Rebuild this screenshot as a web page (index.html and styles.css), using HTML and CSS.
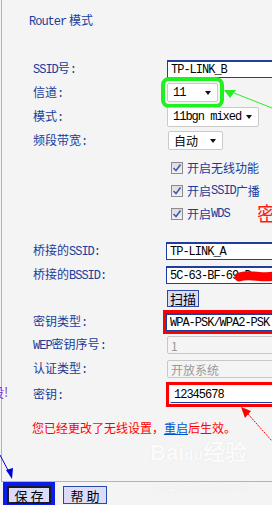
FILE: index.html
```html
<!DOCTYPE html>
<html lang="zh-CN">
<head>
  <meta charset="UTF-8" />
  <title>无线网络基本设置</title>
  <link rel="stylesheet" href="styles.css">
</head>
<body>
  <div class="frame">
    <div class="title"><span class="en">Router</span> 模式</div>

    <div class="row r-ssid">
      <span class="label"><span class="en">SSID</span>号<span class="en">:</span></span>
      <input class="field" type="text" value="TP-LINK_B">
    </div>
    <div class="row r-channel">
      <span class="label">信道<span class="en">:</span></span>
      <div class="select sel-channel mark-green"><span class="en">11</span><i class="arrow"></i></div>
    </div>
    <div class="row r-mode">
      <span class="label">模式<span class="en">:</span></span>
      <div class="select sel-mode"><span class="en">11bgn mixed</span><i class="arrow"></i></div>
    </div>
    <div class="row r-bw">
      <span class="label">频段带宽<span class="en">:</span></span>
      <div class="select sel-bw">自动<i class="arrow"></i></div>
    </div>

    <div class="checks">
      <div class="row check"><span class="label"></span><span class="box"><svg width="10" height="10" viewBox="0 0 10 10"><path d="M1.5 5 L4 7.5 L8.5 1.5" fill="none" stroke="#3d5cb4" stroke-width="1.6"/></svg></span>开启无线功能</div>
      <div class="row check"><span class="label"></span><span class="box"><svg width="10" height="10" viewBox="0 0 10 10"><path d="M1.5 5 L4 7.5 L8.5 1.5" fill="none" stroke="#3d5cb4" stroke-width="1.6"/></svg></span>开启<span class="en">SSID</span>广播</div>
      <div class="row check"><span class="label"></span><span class="box"><svg width="10" height="10" viewBox="0 0 10 10"><path d="M1.5 5 L4 7.5 L8.5 1.5" fill="none" stroke="#3d5cb4" stroke-width="1.6"/></svg></span>开启<span class="en">WDS</span></div>
    </div>

    <div class="row r-bridge">
      <span class="label">桥接的<span class="en">SSID:</span></span>
      <input class="field shift" type="text" value="TP-LINK_A">
    </div>
    <div class="row r-bssid">
      <span class="label">桥接的<span class="en">BSSID:</span></span>
      <input class="field shift" type="text" value="5C-63-BF-69-D">
    </div>
    <div class="row r-scan">
      <span class="label"></span>
      <button class="scan">扫描</button>
    </div>
    <div class="row r-keytype">
      <span class="label">密钥类型<span class="en">:</span></span>
      <input class="field shift mark-red" type="text" value="WPA-PSK/WPA2-PSK">
    </div>
    <div class="row r-wep">
      <span class="label"><span class="en">WEP</span>密钥序号<span class="en">:</span></span>
      <input class="field off" type="text" value="1" disabled>
    </div>
    <div class="row r-auth">
      <span class="label">认证类型<span class="en">:</span></span>
      <input class="field off" type="text" value="开放系统" disabled>
    </div>
    <div class="row r-key">
      <span class="label">密钥<span class="en">:</span></span>
      <input class="field keyfield mark-red" type="text" value="12345678">
    </div>

    <p class="notice">您已经更改了无线设置，<a href="#">重启</a>后生效。</p>
  </div>

  <div class="bar">
    <button class="btn save">保 存</button>
    <button class="btn">帮 助</button>
  </div>

  <!-- screenshot annotations -->
  <span class="note-mi">密</span>
  <span class="note-bang">设!</span>
  <div class="watermark">
    <div class="wm-logo">Bai<b>du</b>经验</div>
    <div class="wm-url">jingyan.baidu.com</div>
  </div>
  <svg class="marks" width="272" height="505" viewBox="0 0 272 505">
    <path d="M239 277 C250 273 262 279 274 276" stroke="#ff0000" stroke-width="9" fill="none" stroke-linecap="round"/>
    <line x1="234" y1="93" x2="272" y2="108" stroke="#22ee22" stroke-width="1"/>
    <polygon points="224,90 236,90 230,98" fill="#22ee22"/>
    <line x1="248" y1="414" x2="272" y2="441" stroke="#ff0000" stroke-width="1" stroke-dasharray="2 1"/>
    <polygon points="241,407 251,411 245,418" fill="#ff0000"/>
    <line x1="0" y1="455" x2="10" y2="474" stroke="#0000dd" stroke-width="1"/>
    <polygon points="6,470 13,468 12,479" fill="#0000dd"/>
  </svg>
</body>
</html>
```

FILE: styles.css
```css
html, body {
  margin: 0;
  padding: 0;
  background: #f4f4f4;
  font-family: "Noto Sans CJK SC", sans-serif;
  font-size: 12px;
  line-height: 14px;
  width: 272px;
  height: 505px;
  overflow: hidden;
  position: relative;
}

.en {
  font-family: "Liberation Mono", monospace;
  letter-spacing: -1px;
}

.frame {
  box-sizing: border-box;
  height: 482px;
  margin-left: 1px;
  padding-left: 31px;
  border-left: 1px solid #f3a45a;
  border-bottom: 1px solid #f3a45a;
  color: #1a3c9a;
  width: 400px;
}

.title {
  margin: 0 0 0 -4px;
  padding-top: 13px;
  height: 14px;
}

.row {
  display: flex;
  align-items: center;
}

.label {
  width: 134px;
  flex: none;
  white-space: nowrap;
}

/* text fields */
.field {
  box-sizing: border-box;
  width: 120px;
  height: 18px;
  margin: 0;
  padding: 0 3px;
  border: 1px solid #1f3f9f;
  border-top-width: 2px;
  background: #fff;
  color: #000;
  font-family: "Liberation Mono", monospace;
  font-size: 12px;
  letter-spacing: -1px;
  outline: none;
}

.field.shift {
  margin-left: -1px;
}

.field.off {
  border: 1px solid #c8c8c8;
  border-radius: 2px;
  background: #f4f4f4;
  color: #999;
  font-family: "Noto Sans CJK SC", sans-serif;
  letter-spacing: 0;
}

.keyfield {
  margin-left: 3px;
  height: 17px;
  border: 1px solid #fff;
  border-bottom-color: #1f3f9f;
}

.mark-red {
  outline: 3px solid #ff0000;
  outline-offset: 0;
}

.keyfield.mark-red {
  outline-offset: 1px;
}

/* fake select boxes */
.select {
  box-sizing: border-box;
  display: flex;
  align-items: center;
  height: 19px;
  padding: 0 6px 0 5px;
  border: 1px solid #cacaca;
  border-radius: 2px;
  background: #fff;
  color: #000;
}

.select .arrow {
  margin-left: auto;
  width: 0;
  height: 0;
  border-left: 3.5px solid transparent;
  border-right: 3.5px solid transparent;
  border-top: 4px solid #111;
}

.sel-channel { width: 51px; }
.sel-mode { width: 92px; height: 20px; }
.sel-bw { width: 55px; margin-left: 1px; }

.mark-green {
  outline: 4px solid #1ff01f;
  outline-offset: 2px;
}

.r-ssid { height: 18px; margin-top: 33px; }
.r-channel { height: 19px; margin-top: 5px; }
.r-mode { height: 20px; margin-top: 5px; }
.r-bw { height: 19px; margin-top: 4px; }

.checks { margin-top: 6px; }

.check {
  height: 23px;
  color: #1a3c9a;
}

.box {
  box-sizing: border-box;
  width: 12px;
  height: 12px;
  margin: 0 4px;
  border: 1px solid #8c8c8c;
  background: linear-gradient(#dcdcdc, #f2f2f2);
  display: flex;
  align-items: center;
  justify-content: center;
}

.r-bridge { height: 18px; margin-top: 17px; }
.r-bssid { height: 18px; margin-top: 6px; }
.r-scan { height: 17px; margin-top: 6px; }
.r-keytype { height: 18px; margin-top: 6px; }
.r-wep { height: 18px; margin-top: 5px; }
.r-auth { height: 18px; margin-top: 6px; }
.r-key { height: 17px; margin-top: 8px; }

.scan {
  box-sizing: border-box;
  width: 32px;
  height: 17px;
  padding: 0;
  border: 1px solid #2a4aa8;
  background: #dcdcf8;
  color: #000;
  font-family: "Noto Sans CJK SC", sans-serif;
  font-size: 13px;
  line-height: 15px;
}

.notice {
  margin: 18px 0 0 -1px;
  color: #ff0000;
  line-height: 14px;
}

.notice a {
  color: #0055cc;
  text-decoration: underline;
}

/* bottom buttons */
.bar {
  display: flex;
  gap: 12px;
  padding: 4px 0 0 7px;
}

.btn {
  box-sizing: border-box;
  width: 44px;
  height: 18px;
  padding: 0;
  border: 1px solid #2a4aa8;
  background: #dcdcf8;
  color: #000;
  font-family: "Noto Sans CJK SC", sans-serif;
  font-size: 13px;
  line-height: 15px;
}

.btn.save {
  border: 2px solid #1a1a2a;
  outline: 4px solid #0a1ee8;
  outline-offset: 0;
}

/* annotations drawn over the screenshot */
.marks {
  position: absolute;
  top: 0;
  left: 0;
  pointer-events: none;
}

.note-mi {
  position: absolute;
  left: 257px;
  top: 202px;
  font-size: 20px;
  line-height: 24px;
  color: #ff1a1a;
}

.note-bang {
  position: absolute;
  left: -9px;
  top: 384px;
  font-size: 13px;
  line-height: 16px;
  color: #7a3ae0;
}

.watermark {
  position: absolute;
  left: 150px;
  top: 440px;
  color: #fbfbfb;
  text-shadow: 0 0 1px #dcdcdc;
  pointer-events: none;
}

.wm-logo {
  font-family: "Liberation Sans", sans-serif;
  font-size: 22px;
  font-weight: bold;
  line-height: 26px;
}

.wm-logo b {
  font-size: 15px;
}

.wm-url {
  margin-top: 12px;
  padding-left: 4px;
  font-family: "Liberation Serif", serif;
  font-size: 13px;
  line-height: 14px;
}
```
